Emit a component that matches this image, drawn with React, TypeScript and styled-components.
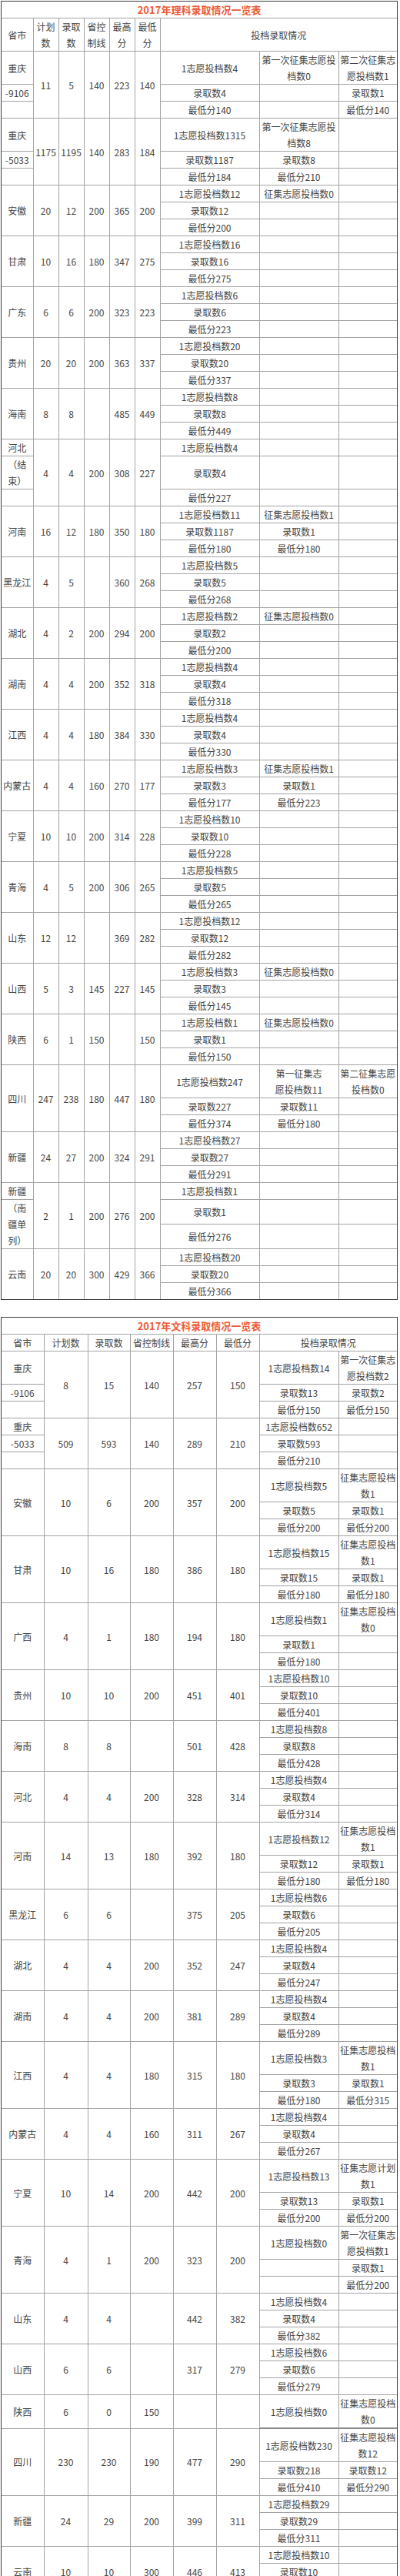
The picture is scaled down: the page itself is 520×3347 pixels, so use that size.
import * as React from "react";
import styled, { createGlobalStyle } from "styled-components";

const GlobalStyle = createGlobalStyle`
  html, body {
    margin: 0;
    padding: 0;
    background: #ffffff;
  }
  body {
    font-family: "Noto Sans CJK SC", "Noto Sans", sans-serif;
  }
`;

const Page = styled.div`
  display: flex;
  flex-direction: column;
  gap: 22px;
  padding: 1px;
`;

const Frame = styled.div`
  width: 516px;
  box-sizing: border-box;
  border: 1px solid #3a3a3a;
`;

const Sheet = styled.table`
  width: 100%;
  border-collapse: collapse;
  border-style: hidden;
  table-layout: fixed;
`;

const Cell = styled.td<{ $thick?: boolean }>`
  border: 1px solid #a3a3a3;
  ${(p) => (p.$thick ? "border-bottom: 2px solid #8a8a8a;" : "")}
  padding: 0;
  text-align: center;
  vertical-align: middle;
  font-size: 12px;
  line-height: 21px;
  color: #454545;
  white-space: pre-line;
`;

const TitleCell = styled(Cell)`
  color: #ee5a35;
  font-size: 13px;
  font-weight: bold;
`;

type ProvCell = { t: string; span?: number };

type Block = {
  prov: string | ProvCell[];
  nums: (string | number)[];
  rows: string[][];
  thick?: boolean;
};

const std = (n: number | string, low: number | string): string[][] => [
  [`1志愿投档数${n}`],
  [`录取数${n}`],
  [`最低分${low}`],
];

const pad = (rows: string[][], cols: number) =>
  rows.map((r) => [...r, ...Array(cols - r.length).fill("")]);

const cq = (code: string): ProvCell[] => [{ t: "重庆" }, { t: code }, { t: "" }];

const scienceBlocks: Block[] = [
  {
    prov: cq("-9106"),
    nums: [11, 5, 140, 223, 140],
    rows: [
      ["1志愿投档数4", "第一次征集志愿投\n档数0", "第二次征集志\n愿投档数1"],
      ["录取数4", "", "录取数1"],
      ["最低分140", "", "最低分140"],
    ],
  },
  {
    prov: cq("-5033"),
    nums: [1175, 1195, 140, 283, 184],
    rows: [
      ["1志愿投档数1315", "第一次征集志愿投\n档数8"],
      ["录取数1187", "录取数8"],
      ["最低分184", "最低分210"],
    ],
  },
  {
    prov: "安徽",
    nums: [20, 12, 200, 365, 200],
    rows: [["1志愿投档数12", "征集志愿投档数0"], ["录取数12"], ["最低分200"]],
  },
  { prov: "甘肃", nums: [10, 16, 180, 347, 275], rows: std(16, 275) },
  { prov: "广东", nums: [6, 6, 200, 323, 223], rows: std(6, 223) },
  { prov: "贵州", nums: [20, 20, 200, 363, 337], rows: std(20, 337) },
  { prov: "海南", nums: [8, 8, "", 485, 449], rows: std(8, 449) },
  {
    prov: [{ t: "河北" }, { t: "（结\n束）" }, { t: "" }],
    nums: [4, 4, 200, 308, 227],
    rows: std(4, 227),
  },
  {
    prov: "河南",
    nums: [16, 12, 180, 350, 180],
    rows: [
      ["1志愿投档数11", "征集志愿投档数1"],
      ["录取数1187", "录取数1"],
      ["最低分180", "最低分180"],
    ],
  },
  { prov: "黑龙江", nums: [4, 5, "", 360, 268], rows: std(5, 268) },
  {
    prov: "湖北",
    nums: [4, 2, 200, 294, 200],
    rows: [["1志愿投档数2", "征集志愿投档数0"], ["录取数2"], ["最低分200"]],
  },
  { prov: "湖南", nums: [4, 4, 200, 352, 318], rows: std(4, 318) },
  { prov: "江西", nums: [4, 4, 180, 384, 330], rows: std(4, 330) },
  {
    prov: "内蒙古",
    nums: [4, 4, 160, 270, 177],
    rows: [
      ["1志愿投档数3", "征集志愿投档数1"],
      ["录取数3", "录取数1"],
      ["最低分177", "最低分223"],
    ],
  },
  { prov: "宁夏", nums: [10, 10, 200, 314, 228], rows: std(10, 228) },
  { prov: "青海", nums: [4, 5, 200, 306, 265], rows: std(5, 265) },
  { prov: "山东", nums: [12, 12, "", 369, 282], rows: std(12, 282) },
  {
    prov: "山西",
    nums: [5, 3, 145, 227, 145],
    rows: [["1志愿投档数3", "征集志愿投档数0"], ["录取数3"], ["最低分145"]],
  },
  {
    prov: "陕西",
    nums: [6, 1, 150, "", 150],
    rows: [["1志愿投档数1", "征集志愿投档数0"], ["录取数1"], ["最低分150"]],
  },
  {
    prov: "四川",
    nums: [247, 238, 180, 447, 180],
    rows: [
      ["1志愿投档数247", "第一征集志\n愿投档数11", "第二征集志愿\n投档数0"],
      ["录取数227", "录取数11"],
      ["最低分374", "最低分180"],
    ],
  },
  { prov: "新疆", nums: [24, 27, 200, 324, 291], rows: std(27, 291) },
  {
    prov: [{ t: "新疆" }, { t: "（南\n疆单\n列）", span: 2 }],
    nums: [2, 1, 200, 276, 200],
    rows: std(1, 276),
  },
  { prov: "云南", nums: [20, 20, 300, 429, 366], rows: std(20, 366) },
];

const artsBlocks: Block[] = [
  {
    prov: cq("-9106"),
    nums: [8, 15, 140, 257, 150],
    rows: [
      ["1志愿投档数14", "第一次征集志\n愿投档数2"],
      ["录取数13", "录取数2"],
      ["最低分150", "最低分150"],
    ],
  },
  {
    prov: cq("-5033"),
    nums: [509, 593, 140, 289, 210],
    rows: std(652, 210).map((r, i) => (i === 1 ? ["录取数593"] : r)),
  },
  {
    prov: "安徽",
    nums: [10, 6, 200, 357, 200],
    rows: [
      ["1志愿投档数5", "征集志愿投档\n数1"],
      ["录取数5", "录取数1"],
      ["最低分200", "最低分200"],
    ],
  },
  {
    prov: "甘肃",
    nums: [10, 16, 180, 386, 180],
    rows: [
      ["1志愿投档数15", "征集志愿投档\n数1"],
      ["录取数15", "录取数1"],
      ["最低分180", "最低分180"],
    ],
  },
  {
    prov: "广西",
    nums: [4, 1, 180, 194, 180],
    rows: [["1志愿投档数1", "征集志愿投档\n数0"], ["录取数1"], ["最低分180"]],
  },
  { prov: "贵州", nums: [10, 10, 200, 451, 401], rows: std(10, 401) },
  { prov: "海南", nums: [8, 8, "", 501, 428], rows: std(8, 428) },
  { prov: "河北", nums: [4, 4, 200, 328, 314], rows: std(4, 314) },
  {
    prov: "河南",
    nums: [14, 13, 180, 392, 180],
    rows: [
      ["1志愿投档数12", "征集志愿投档\n数1"],
      ["录取数12", "录取数1"],
      ["最低分180", "最低分180"],
    ],
  },
  { prov: "黑龙江", nums: [6, 6, "", 375, 205], rows: std(6, 205) },
  { prov: "湖北", nums: [4, 4, 200, 352, 247], rows: std(4, 247) },
  { prov: "湖南", nums: [4, 4, 200, 381, 289], rows: std(4, 289) },
  {
    prov: "江西",
    nums: [4, 4, 180, 315, 180],
    rows: [
      ["1志愿投档数3", "征集志愿投档\n数1"],
      ["录取数3", "录取数1"],
      ["最低分180", "最低分315"],
    ],
  },
  { prov: "内蒙古", nums: [4, 4, 160, 311, 267], rows: std(4, 267) },
  {
    prov: "宁夏",
    nums: [10, 14, 200, 442, 200],
    rows: [
      ["1志愿投档数13", "征集志愿计划\n数1"],
      ["录取数13", "录取数1"],
      ["最低分200", "最低分200"],
    ],
  },
  {
    prov: "青海",
    nums: [4, 1, 200, 323, 200],
    rows: [
      ["1志愿投档数0", "第一次征集志\n愿投档数1"],
      ["", "录取数1"],
      ["", "最低分200"],
    ],
  },
  { prov: "山东", nums: [4, 4, "", 442, 382], rows: std(4, 382) },
  { prov: "山西", nums: [6, 6, "", 317, 279], rows: std(6, 279) },
  {
    prov: "陕西",
    nums: [6, 0, 150, "", ""],
    rows: [["1志愿投档数0", "征集志愿投档\n数0"]],
    thick: true,
  },
  {
    prov: "四川",
    nums: [230, 230, 190, 477, 290],
    rows: [
      ["1志愿投档数230", "征集志愿投档\n数12"],
      ["录取数218", "录取数12"],
      ["最低分410", "最低分290"],
    ],
  },
  { prov: "新疆", nums: [24, 29, 200, 399, 311], rows: std(29, 311) },
  { prov: "云南", nums: [10, 10, 300, 446, 413], rows: std(10, 413) },
];

function BlockRows({ block, cols }: { block: Block; cols: number }) {
  const rows = pad(block.rows, cols);
  const provCells: ProvCell[] =
    typeof block.prov === "string"
      ? [{ t: block.prov, span: rows.length }]
      : block.prov;

  // which prov cell starts on which row
  const starts: Record<number, ProvCell> = {};
  let at = 0;
  provCells.forEach((c) => {
    starts[at] = c;
    at += c.span ?? 1;
  });

  return (
    <>
      {rows.map((row, i) => {
        const pc = starts[i];
        return (
          <tr key={i}>
            {pc && <Cell rowSpan={pc.span ?? 1}>{pc.t}</Cell>}
            {i === 0 &&
              block.nums.map((n, k) => (
                <Cell key={k} rowSpan={rows.length}>
                  {n}
                </Cell>
              ))}
            {row.map((t, k) => (
              <Cell key={k} $thick={block.thick && i === rows.length - 1}>
                {t}
              </Cell>
            ))}
          </tr>
        );
      })}
    </>
  );
}

function AdmissionTable({
  title,
  widths,
  blocks,
  cols,
}: {
  title: string;
  widths: number[];
  blocks: Block[];
  cols: number;
}) {
  return (
    <Frame>
      <Sheet>
        <colgroup>
          {widths.map((w, i) => (
            <col key={i} style={{ width: w }} />
          ))}
        </colgroup>
        <tbody>
          <tr>
            <TitleCell colSpan={widths.length}>{title}</TitleCell>
          </tr>
          <tr>
            <Cell>省市</Cell>
            <Cell>计划数</Cell>
            <Cell>录取数</Cell>
            <Cell>省控制线</Cell>
            <Cell>最高分</Cell>
            <Cell>最低分</Cell>
            <Cell colSpan={cols}>投档录取情况</Cell>
          </tr>
          {blocks.map((b, i) => (
            <BlockRows key={i} block={b} cols={cols} />
          ))}
        </tbody>
      </Sheet>
    </Frame>
  );
}

export default function App() {
  return (
    <>
      <GlobalStyle />
      <Page>
        <AdmissionTable
          title="2017年理科录取情况一览表"
          widths={[41, 33, 33, 33, 33, 33, 129, 103, 76]}
          blocks={scienceBlocks}
          cols={3}
        />
        <AdmissionTable
          title="2017年文科录取情况一览表"
          widths={[55, 57, 55, 56, 56, 56, 103, 76]}
          blocks={artsBlocks}
          cols={2}
        />
      </Page>
    </>
  );
}
